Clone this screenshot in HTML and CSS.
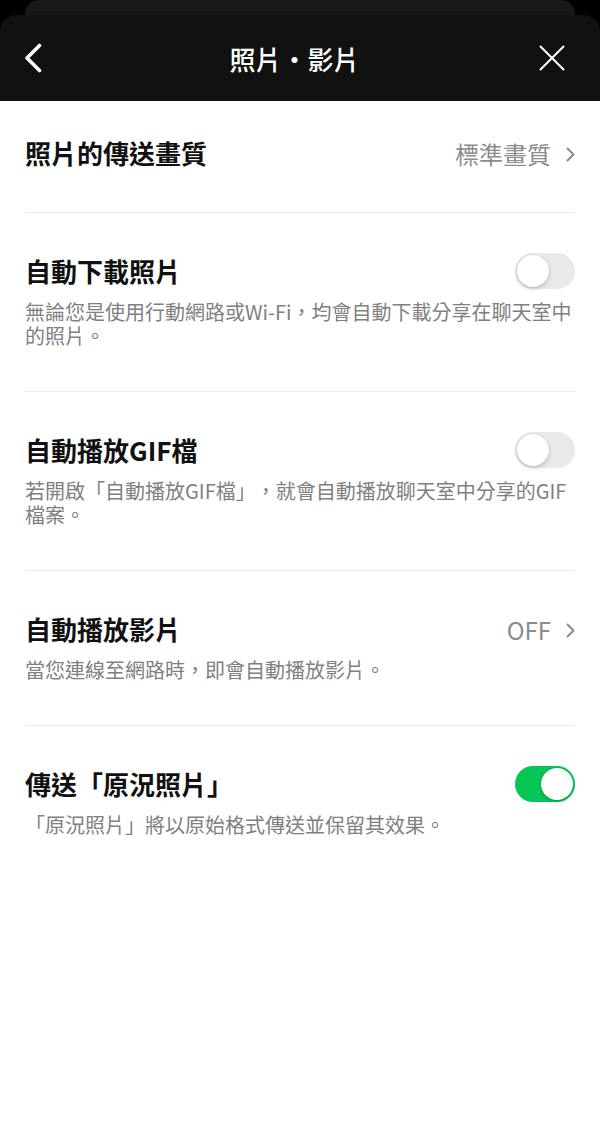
FILE: index.html
```html
<!DOCTYPE html>
<html lang="zh-Hant">

<head>
    <meta charset="UTF-8">
    <meta name="viewport" content="width=device-width, initial-scale=1.0">
    <title>照片・影片</title>
    <link rel="stylesheet" href="styles.css">
</head>

<body>
    <div class="top">
        <div class="sheet-back"></div>
        <header class="header">
            <button class="icon-btn back" aria-label="Back">
                <svg width="18" height="30" viewBox="0 0 18 30">
                    <polyline points="15.5,2.5 3,15 15.5,27.5" fill="none" stroke="#fff" stroke-width="3.6" stroke-linecap="round" stroke-linejoin="round"/>
                </svg>
            </button>
            <h1 class="title">照片・影片</h1>
            <button class="icon-btn close" aria-label="Close">
                <svg width="26" height="26" viewBox="0 0 26 26">
                    <path d="M1.5 1.5 L24.5 24.5 M24.5 1.5 L1.5 24.5" fill="none" stroke="#fff" stroke-width="2" stroke-linecap="round"/>
                </svg>
            </button>
        </header>
    </div>

    <main class="settings">
        <div class="item item-first">
            <div class="item-head">
                <span class="item-title">照片的傳送畫質</span>
                <span class="item-value">標準畫質
                    <svg class="chevron" width="9" height="15" viewBox="0 0 9 15">
                        <polyline points="1.5,1.5 7.5,7.5 1.5,13.5" fill="none" stroke="#8c8c8c" stroke-width="2" stroke-linecap="round" stroke-linejoin="round"/>
                    </svg>
                </span>
            </div>
        </div>

        <div class="item">
            <div class="item-head">
                <span class="item-title">自動下載照片</span>
                <span class="toggle"><span class="knob"></span></span>
            </div>
            <p class="item-desc">無論您是使用行動網路或Wi-Fi，均會自動下載分享在聊天室中的照片。</p>
        </div>

        <div class="item">
            <div class="item-head">
                <span class="item-title">自動播放GIF檔</span>
                <span class="toggle"><span class="knob"></span></span>
            </div>
            <p class="item-desc">若開啟「自動播放GIF檔」，就會自動播放聊天室中分享的GIF檔案。</p>
        </div>

        <div class="item">
            <div class="item-head">
                <span class="item-title">自動播放影片</span>
                <span class="item-value">OFF
                    <svg class="chevron" width="9" height="15" viewBox="0 0 9 15">
                        <polyline points="1.5,1.5 7.5,7.5 1.5,13.5" fill="none" stroke="#8c8c8c" stroke-width="2" stroke-linecap="round" stroke-linejoin="round"/>
                    </svg>
                </span>
            </div>
            <p class="item-desc">當您連線至網路時，即會自動播放影片。</p>
        </div>

        <div class="item item-last">
            <div class="item-head">
                <span class="item-title">傳送「原況照片」</span>
                <span class="toggle on"><span class="knob"></span></span>
            </div>
            <p class="item-desc">「原況照片」將以原始格式傳送並保留其效果。</p>
        </div>
    </main>
</body>

</html>
```

FILE: styles.css
```css
body {
    margin: 0;
    background-color: #ffffff;
    font-family: "Noto Sans CJK TC", "Noto Sans", sans-serif;
    color: #111111;
    text-spacing-trim: space-all; /* keep full-width punctuation */
}

.top {
    background-color: #000000;
}

/* the card stacked behind the current sheet */
.sheet-back {
    height: 15px;
    margin: 0 25px;
    background-color: #181818;
    border-radius: 14px 14px 0 0;
}

.header {
    height: 86px;
    background-color: #111111;
    border-radius: 16px 16px 0 0;
    display: grid;
    grid-template-columns: 1fr auto 1fr;
    align-items: center;
    padding: 0 35px 0 24px;
}

.title {
    margin: 0;
    color: #ffffff;
    font-size: 26px;
    font-weight: 500;
}

.icon-btn {
    background: none;
    border: none;
    padding: 0;
    display: flex;
    cursor: pointer;
}

.back {
    justify-self: start;
}

.close {
    justify-self: end;
}

.settings {
    padding: 0 25px;
}

.item {
    padding: 40px 0 43px;
    border-bottom: 1px solid #ededed;
}

.item-first {
    padding: 34px 0 41px;
}

.item-last {
    border-bottom: none;
}

.item-head {
    height: 36px;
    display: flex;
    align-items: center;
    justify-content: space-between;
}

.item-title {
    font-size: 26px;
    font-weight: 700;
    line-height: 36px;
}

.item-value {
    display: flex;
    align-items: center;
    gap: 15px;
    font-size: 24px;
    color: #8c8c8c;
}

.chevron {
    margin-top: 2px;
}

.item-desc {
    margin: 11px 0 0;
    font-size: 20px;
    line-height: 24px;
    color: #808080;
}

.toggle {
    width: 60px;
    height: 36px;
    border-radius: 18px;
    background-color: #e9e9eb;
    box-sizing: border-box;
    padding: 2px;
    display: flex;
}

.knob {
    width: 32px;
    height: 32px;
    border-radius: 50%;
    background-color: #ffffff;
    box-shadow: 0 2px 4px rgba(0, 0, 0, 0.18), 0 0 0 0.5px rgba(0, 0, 0, 0.06);
}

.toggle.on {
    background-color: #06c755;
    justify-content: flex-end;
}
```
